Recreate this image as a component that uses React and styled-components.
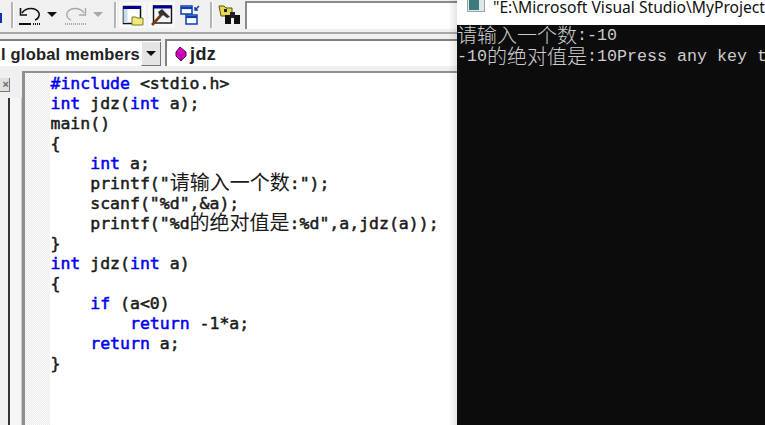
import React from "react"
import styled, { createGlobalStyle } from "styled-components"

const Global = createGlobalStyle`
  html, body { margin: 0; padding: 0; background: #f0f0f0; overflow: hidden; }
`

const Page = styled.div`
  display: flex;
  width: 765px;
  height: 425px;
  overflow: hidden;
`

const Ide = styled.div`
  position: relative;
  width: 457px;
  display: flex;
  flex-direction: column;
  background: #f0f0f0;
  &::after {
    content: "";
    position: absolute;
    top: 0;
    right: 0;
    bottom: 0;
    width: 9px;
    background: linear-gradient(to right, rgba(0, 0, 0, 0), rgba(0, 0, 0, 0.1));
  }
`

const Toolbar = styled.div`
  height: 34px;
  padding-bottom: 3px;
  display: flex;
  align-items: center;
  flex-shrink: 0;
  border-bottom: 2px solid #a8a8a8;
  box-sizing: border-box;
`

const BlueStub = styled.div`
  width: 2px;
  height: 10px;
  margin-top: 6px;
  background: #1030b0;
`

const Sep = styled.div`
  width: 2px;
  height: 26px;
  background: #b4b4b4;
  border-right: 1px solid #fff;
  margin: ${(p) => p.$margin || "0"};
`

const ToolButton = styled.div`
  width: ${(p) => p.$w || 26}px;
  height: 26px;
  flex-shrink: 0;
  display: flex;
  align-items: center;
  justify-content: center;
  background: ${(p) => (p.$pressed ? "#f8f8f8" : "transparent")};
  margin: ${(p) => p.$margin || "0"};
`

const DropArrow = styled.div`
  width: 0;
  height: 0;
  border-left: 5px solid transparent;
  border-right: 5px solid transparent;
  border-top: 5px solid ${(p) => p.$color || "#111"};
  margin: ${(p) => p.$margin || "0"};
`

const FindInput = styled.div`
  flex: 1;
  height: 28px;
  background: #fff;
  margin-left: 3px;
  border-top: 2px solid #8a8a8a;
  border-left: 2px solid #8a8a8a;
  box-sizing: border-box;
`

const ComboRow = styled.div`
  height: 32px;
  margin-top: 5px;
  display: flex;
  gap: 4px;
  flex-shrink: 0;
`

const Combo = styled.div`
  width: ${(p) => (p.$w ? `${p.$w}px` : "auto")};
  flex: ${(p) => (p.$w ? "none" : 1)};
  height: 27px;
  padding-top: 1px;
  display: flex;
  align-items: center;
  background: #fff;
  border-top: 2px solid #808080;
  border-left: ${(p) => (p.$w ? "0" : "2px solid #808080")};
  padding-left: ${(p) => (p.$w ? 0 : 8)}px;
  box-sizing: border-box;
  overflow: hidden;
  font-family: "Liberation Sans", Arial, sans-serif;
  font-weight: 700;
  font-size: 16.5px;
  letter-spacing: 0.2px;
  color: #222;
`

const ComboText = styled.div`
  flex: 1;
  white-space: nowrap;
  overflow: hidden;
  padding-left: 1px;
`

const ComboButton = styled.div`
  width: 20px;
  height: 24px;
  margin-top: -1px;
  flex-shrink: 0;
  background: #e4e4e4;
  border-left: 1px solid #fff;
  border-right: 1px solid #777;
  border-bottom: 1px solid #777;
  box-sizing: border-box;
  display: flex;
  align-items: center;
  justify-content: center;
`

const FuncName = styled.span`
  margin-left: 3px;
  font-size: 18px;
  letter-spacing: 0.4px;
`

const Workspace = styled.div`
  flex: 1;
  display: flex;
  min-height: 0;
`

const SidePane = styled.div`
  width: 6px;
  padding-top: 7px;
  display: flex;
  flex-direction: column;
  align-items: flex-start;
`

const CloseBox = styled.div`
  width: 9px;
  height: 13px;
  flex-shrink: 0;
  background: #e0e0e0;
  border-bottom: 1px solid #777;
  border-right: 1px solid #777;
  font: 700 11px/13px "Liberation Sans", sans-serif;
  color: #666;
  text-align: right;
`

const PaneEdge = styled.div`
  width: 12px;
  margin-top: 27px;
  margin-left: 2px;
  border-left: 2px solid #333;
  background: #f6f6f6;
  box-shadow: inset -1px 0 0 #ccc;
  flex-shrink: 0;
`

const EditorFrame = styled.div`
  flex: 1;
  display: flex;
  border-top: 2px solid #8f8f8f;
  border-left: 3px solid #8f8f8f;
  background: #fff;
  min-width: 0;
`

const Gutter = styled.div`
  width: 25px;
  flex-shrink: 0;
  background-color: #f4f4f4;
  background-image: repeating-conic-gradient(#ececec 0 25%, #fbfbfb 0 50%);
  background-size: 2px 2px;
`

const Code = styled.div`
  flex: 1;
  padding: 0.5px 0 0 0.5px;
  font-family: "DejaVu Sans Mono", "Liberation Mono", monospace;
  font-size: 16.5px;
  line-height: 20px;
  color: #1a1a1a;
  -webkit-text-stroke: 0.5px #1a1a1a;
`

const Line = styled.div`
  height: 20px;
  white-space: pre;
  padding-left: ${(p) => (p.$indent || 0) * 39.75}px;
`

const Kw = styled.span`
  color: #0000f0;
  -webkit-text-stroke: 0.5px #0000f0;
`

const CodeCjk = styled.span`
  font-family: "Noto Sans CJK SC", sans-serif;
  font-size: 20px;
  line-height: 0;
  vertical-align: -1px;
  -webkit-text-stroke: 0;
  font-weight: 400;
`

const ConsoleWindow = styled.div`
  flex: 1;
  display: flex;
  flex-direction: column;
  min-width: 0;
`

const TitleBar = styled.div`
  height: 25px;
  background: #fff;
  display: flex;
  align-items: flex-start;
  gap: 8px;
  padding-left: 10px;
  flex-shrink: 0;
  overflow: hidden;
`

const TitleText = styled.div`
  font-family: "Noto Sans", "Open Sans", sans-serif;
  font-size: 15.65px;
  line-height: 14px;
  color: #111;
  white-space: nowrap;
`

const ConsoleBody = styled.div`
  flex: 1;
  background: #0c0c0c;
  color: #cccccc;
  font-family: "Liberation Mono", "DejaVu Sans Mono", monospace;
  font-size: 16.67px;
  line-height: 21px;
  white-space: pre;
  overflow: hidden;
`

const ConsoleLine = styled.div`
  height: 21px;
`

const ConsoleCjk = styled.span`
  font-family: "Noto Sans CJK SC", sans-serif;
  font-size: 20px;
  line-height: 0;
  vertical-align: -3px;
  font-weight: 300;
`

const UndoIcon = ({ color = "#111" }) => (
  <svg width="24" height="22" viewBox="0 0 24 22" fill="none" stroke={color} strokeWidth="1.6">
    <path d="M4 9 C8 3 18 3 21 9 C22 12 20 15 17 16" />
    <path d="M2.5 4 V11 H9" />
    <path d="M1 20 H13" strokeWidth="2" />
    <path d="M15 20 H22" strokeDasharray="1 1" strokeWidth="2" />
  </svg>
)

const RedoIcon = () => (
  <svg width="24" height="22" viewBox="0 0 24 22" fill="none" stroke="#a8a8a8" strokeWidth="1.4">
    <path d="M20 9 C16 3 6 3 3 9 C2 12 4 15 7 16" />
    <path d="M21.5 4 V11 H15" />
    <path d="M1 20 H22" strokeDasharray="1 1" strokeWidth="2" />
  </svg>
)

const WorkspaceIcon = () => (
  <svg width="22" height="22" viewBox="0 0 22 22">
    <rect x="1.5" y="2.5" width="17" height="17" fill="#fff" stroke="#111" strokeWidth="1.5" />
    <rect x="1" y="2" width="18" height="3" fill="#000090" />
    <rect x="1.5" y="5" width="4" height="14" fill="#c8dcf0" />
    <path d="M10 13 H14 L15 14 H21 V21 H10 Z" fill="#f2e77a" stroke="#7a7a30" />
  </svg>
)

const HammerIcon = () => (
  <svg width="22" height="22" viewBox="0 0 22 22">
    <rect x="2.5" y="2" width="18" height="17" fill="#f4f4f4" stroke="#111" strokeWidth="1.4" />
    <rect x="2" y="1.5" width="19" height="3" fill="#000090" />
    <path d="M1 21 L12 9" stroke="#7a3a10" strokeWidth="2.6" />
    <path d="M7 8 L11 5 L19 13 L16 14 L12 11 L9 12 Z" fill="#333" />
  </svg>
)

const WindowsIcon = () => (
  <svg width="22" height="22" viewBox="0 0 22 22" fill="#fff" stroke="#0a3fb0" strokeWidth="1.5">
    <rect x="1" y="2" width="11" height="8" />
    <path d="M1 4 H12" strokeWidth="2.2" />
    <rect x="6" y="11" width="11" height="9" />
    <path d="M6 13 H17" strokeWidth="2.2" />
    <path d="M19 2 L15 6 M15 3 V6 H18" strokeWidth="1.4" fill="none" />
  </svg>
)

const BinocularIcon = () => (
  <svg width="24" height="22" viewBox="0 0 24 22">
    <path d="M1 2 H6 L8 4 H14 V12 H3 Z" fill="#e6d84a" stroke="#55501a" />
    <rect x="6" y="5" width="3" height="3" fill="#222" />
    <rect x="7" y="11" width="6" height="9" fill="#111" />
    <rect x="16" y="11" width="6" height="9" fill="#111" />
    <rect x="12" y="8" width="5" height="6" fill="#222" />
  </svg>
)

const GemIcon = () => (
  <svg width="12" height="16" viewBox="0 0 12 16">
    <path d="M5 1 L11 6 V10 L6 15 L1 10 V6 Z" fill="#e000c8" stroke="#40104a" strokeWidth="1" />
    <path d="M1 6 L6 10 L11 6 M6 10 V15" fill="none" stroke="#60106a" strokeWidth="0.7" />
  </svg>
)

const ConsoleIcon = () => (
  <svg width="18" height="12" viewBox="0 0 18 12" style={{ flexShrink: 0 }}>
    <rect x="0.5" y="-1" width="17" height="12.5" fill="#dfe8ea" stroke="#9aa4a8" />
    <rect x="2" y="0" width="10" height="10" fill="#3c7a7c" />
  </svg>
)

export default function App() {
  return (
    <Page>
      <Global />
      <Ide>
        <Toolbar>
          <BlueStub />
          <Sep $margin="0 0 0 9px" />
          <ToolButton $margin="0 0 0 3px"><UndoIcon /></ToolButton>
          <DropArrow $margin="0 0 0 4px" />
          <ToolButton $margin="0 0 0 6px"><RedoIcon /></ToolButton>
          <DropArrow $color="#a8a8a8" $margin="0 0 0 4px" />
          <Sep $margin="0 0 0 11px" />
          <ToolButton $pressed $w={27} $margin="0 0 0 2px"><WorkspaceIcon /></ToolButton>
          <ToolButton $pressed $w={27} $margin="0 0 0 2px"><HammerIcon /></ToolButton>
          <ToolButton $w={22} $margin="0 0 0 5px"><WindowsIcon /></ToolButton>
          <Sep $margin="0 0 0 8px" />
          <ToolButton $w={24} $margin="0 0 0 5px"><BinocularIcon /></ToolButton>
          <FindInput />
        </Toolbar>
        <ComboRow>
          <Combo $w={161}>
            <ComboText>l global members</ComboText>
            <ComboButton><DropArrow /></ComboButton>
          </Combo>
          <Combo>
            <GemIcon />
            <FuncName>jdz</FuncName>
          </Combo>
        </ComboRow>
        <Workspace>
          <SidePane>
            <CloseBox>×</CloseBox>
          </SidePane>
          <PaneEdge />
          <EditorFrame>
            <Gutter />
            <Code>
              <Line><Kw>#include</Kw> &lt;stdio.h&gt;</Line>
              <Line><Kw>int</Kw> jdz(<Kw>int</Kw> a);</Line>
              <Line>main()</Line>
              <Line>{"{"}</Line>
              <Line $indent={1}><Kw>int</Kw> a;</Line>
              <Line $indent={1}>printf("<CodeCjk>请输入一个数</CodeCjk>:");</Line>
              <Line $indent={1}>scanf("%d",&amp;a);</Line>
              <Line $indent={1}>printf("%d<CodeCjk>的绝对值是</CodeCjk>:%d",a,jdz(a));</Line>
              <Line>{"}"}</Line>
              <Line><Kw>int</Kw> jdz(<Kw>int</Kw> a)</Line>
              <Line>{"{"}</Line>
              <Line $indent={1}><Kw>if</Kw> (a&lt;0)</Line>
              <Line $indent={2}><Kw>return</Kw> -1*a;</Line>
              <Line $indent={1}><Kw>return</Kw> a;</Line>
              <Line>{"}"}</Line>
            </Code>
          </EditorFrame>
        </Workspace>
      </Ide>
      <ConsoleWindow>
        <TitleBar>
          <ConsoleIcon />
          <TitleText>"E:\Microsoft Visual Studio\MyProject</TitleText>
        </TitleBar>
        <ConsoleBody>
          <ConsoleLine><ConsoleCjk>请输入一个数</ConsoleCjk>:-10</ConsoleLine>
          <ConsoleLine>-10<ConsoleCjk>的绝对值是</ConsoleCjk>:10Press any key t</ConsoleLine>
        </ConsoleBody>
      </ConsoleWindow>
    </Page>
  )
}
